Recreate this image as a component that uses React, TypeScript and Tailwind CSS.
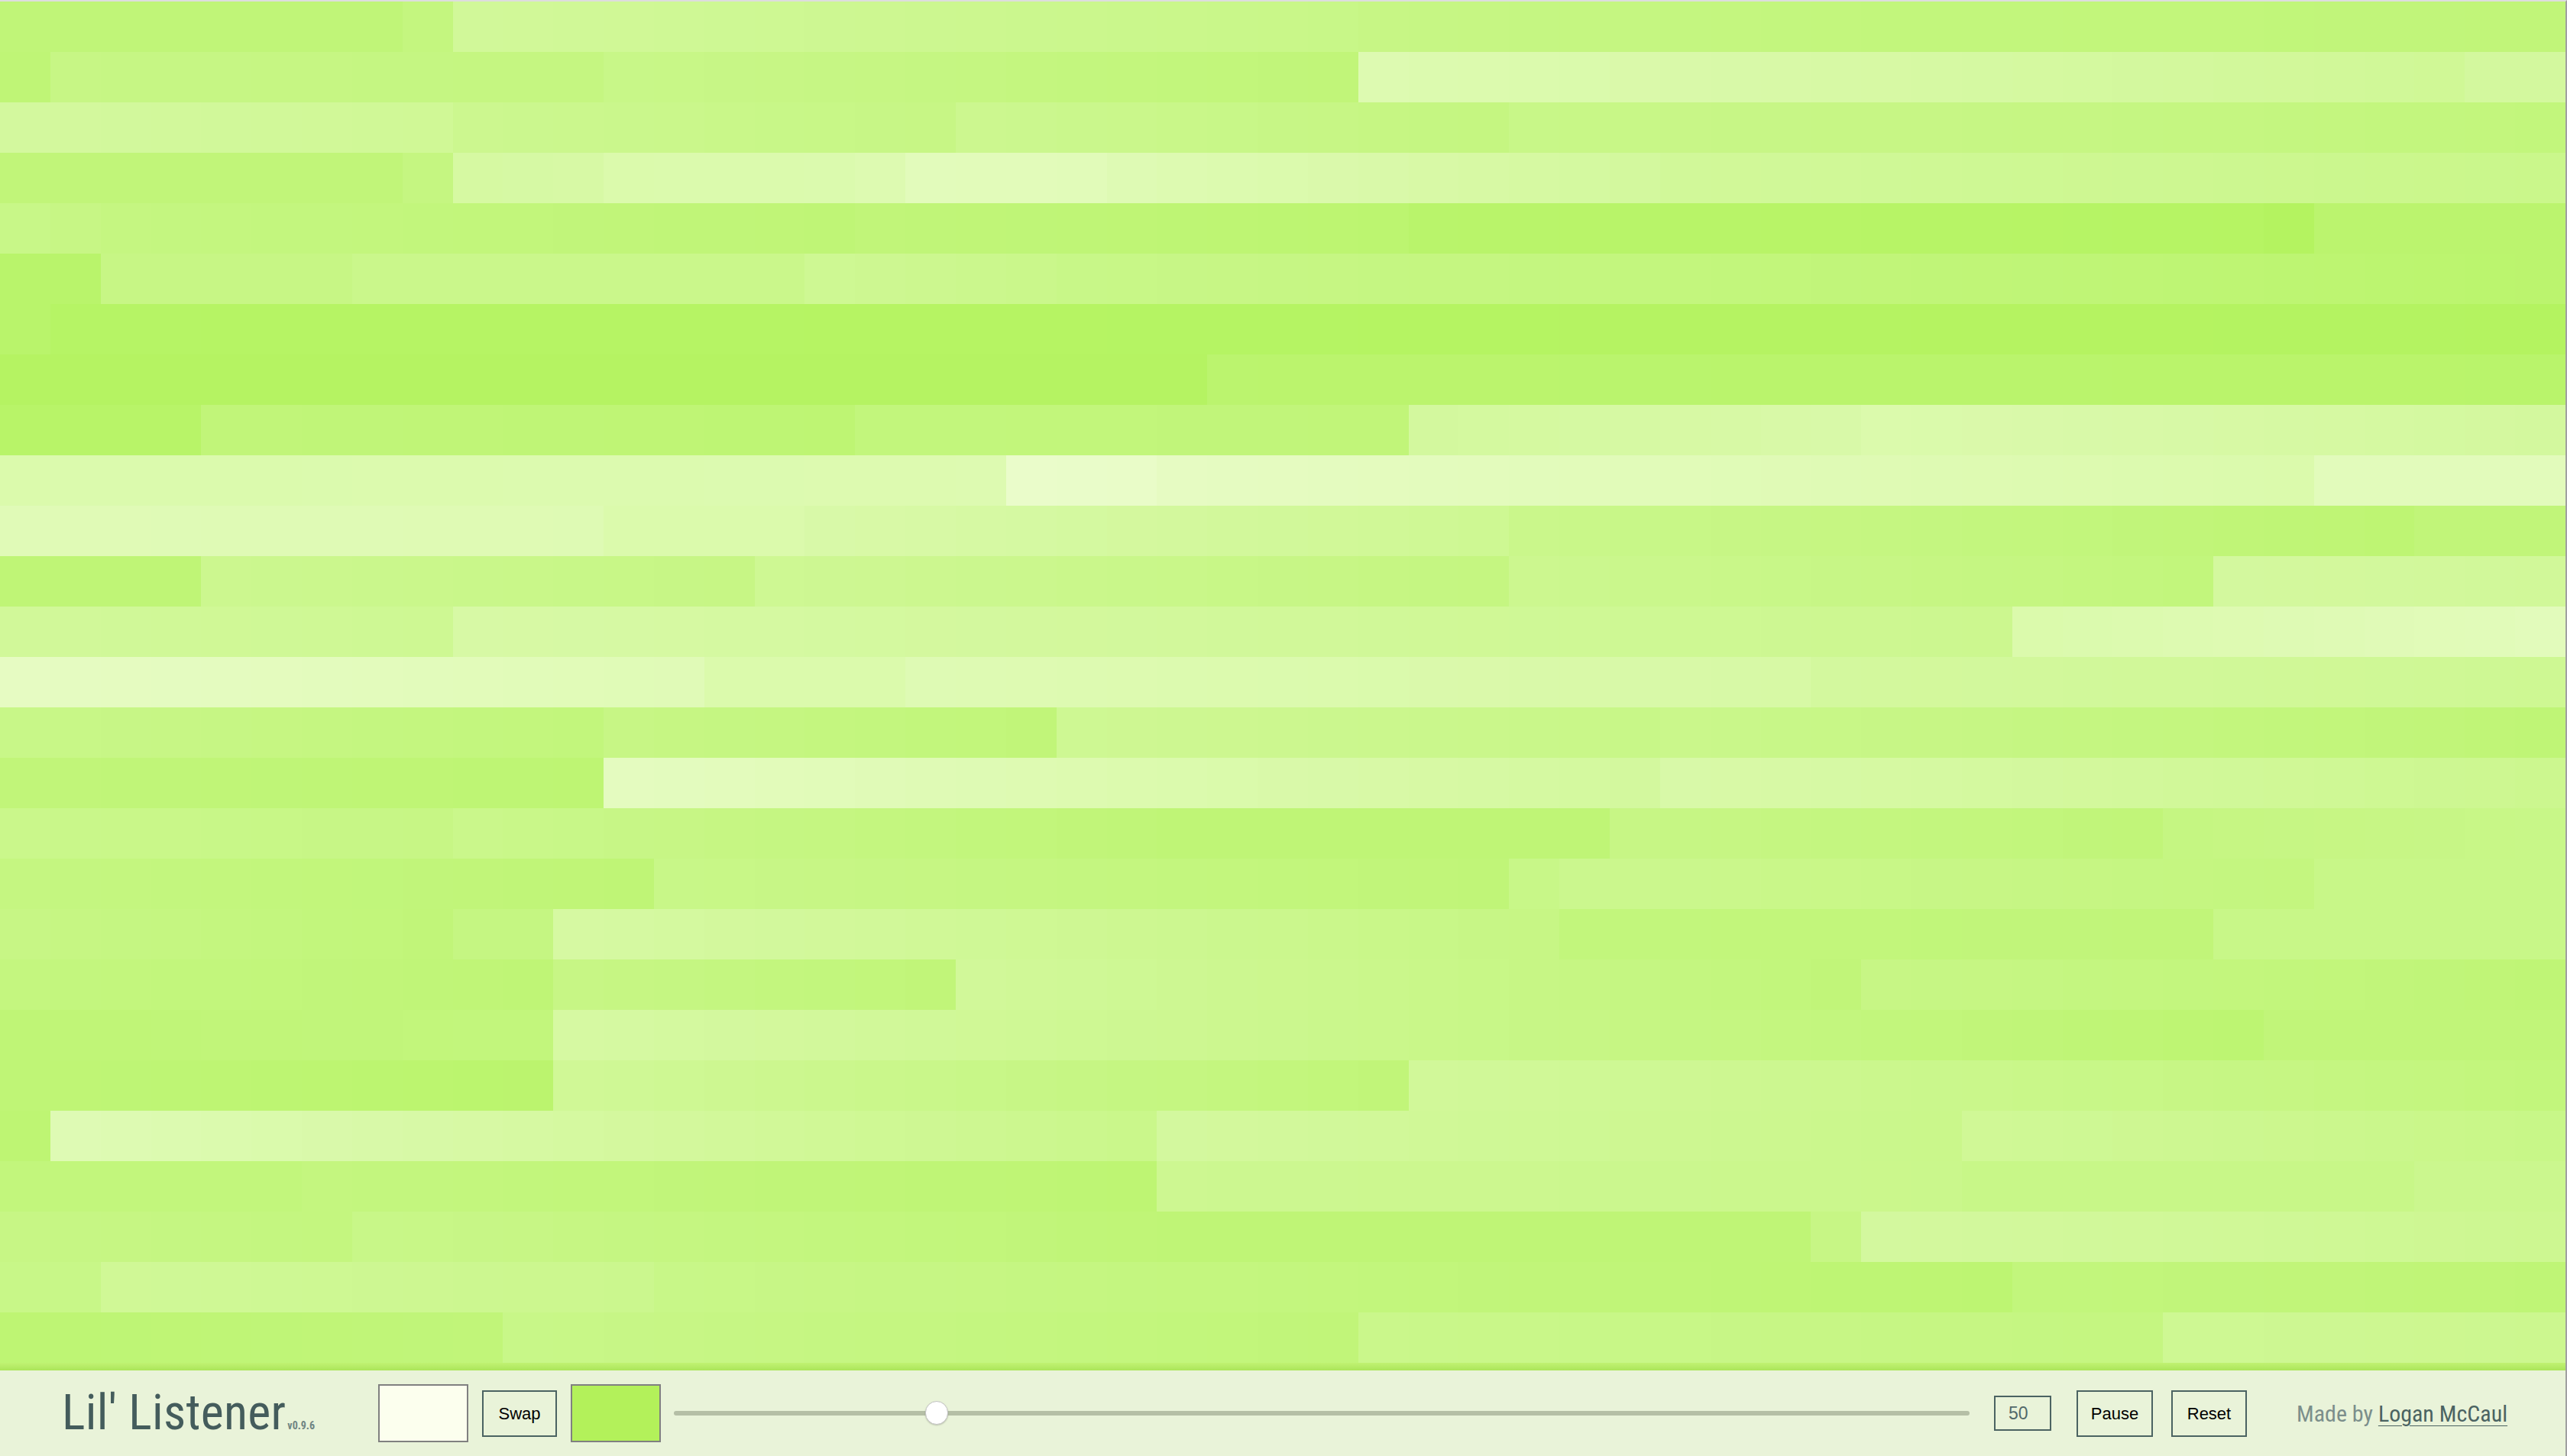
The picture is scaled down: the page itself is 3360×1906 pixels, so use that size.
import React from 'react';

// segments per row: [endCol, tStart, tEnd], t = % toward cream
const ROWS: number[][][] = [
  [[8, 19, 19], [9, 24, 24], [27, 42, 30], [38, 28, 22], [51, 22, 20]],
  [[1, 18, 18], [12, 28, 25], [27, 30, 20], [49, 58, 40], [51, 45, 45]],
  [[9, 45, 40], [19, 35, 28], [30, 35, 25], [38, 30, 28], [51, 28, 22]],
  [[8, 20, 20], [9, 25, 25], [12, 48, 50], [17, 55, 56], [18, 58, 58], [22, 65, 64], [33, 60, 45], [51, 42, 32]],
  [[2, 30, 28], [17, 25, 18], [28, 20, 14], [45, 10, 5], [46, 3, 3], [51, 12, 12]],
  [[2, 10, 10], [7, 28, 28], [16, 32, 32], [21, 38, 32], [51, 30, 12]],
  [[1, 10, 10], [51, 6, 3]],
  [[24, 4, 4], [51, 12, 10]],
  [[4, 8, 8], [17, 20, 16], [28, 22, 20], [37, 45, 52], [51, 55, 45]],
  [[20, 55, 58], [23, 75, 74], [46, 70, 55], [51, 65, 65]],
  [[12, 62, 60], [16, 55, 55], [30, 52, 38], [48, 32, 16], [51, 20, 20]],
  [[4, 18, 18], [15, 35, 28], [30, 38, 25], [44, 35, 22], [51, 45, 42]],
  [[9, 42, 38], [40, 50, 35], [51, 55, 65]],
  [[14, 70, 62], [18, 55, 55], [36, 60, 50], [51, 45, 38]],
  [[12, 30, 22], [21, 28, 20], [33, 38, 30], [51, 32, 18]],
  [[12, 20, 16], [33, 68, 45], [51, 52, 35]],
  [[9, 32, 28], [24, 32, 18], [32, 18, 18], [43, 28, 20], [51, 26, 30]],
  [[13, 25, 18], [30, 30, 19], [31, 30, 30], [46, 34, 24], [51, 30, 30]],
  [[9, 28, 20], [11, 26, 26], [31, 48, 28], [44, 22, 20], [51, 30, 30]],
  [[11, 24, 18], [19, 28, 20], [36, 42, 22], [37, 20, 20], [51, 28, 18]],
  [[11, 18, 22], [45, 48, 15], [51, 20, 20]],
  [[11, 18, 12], [28, 40, 20], [51, 42, 22]],
  [[1, 16, 16], [23, 60, 32], [39, 45, 32], [51, 40, 30]],
  [[6, 22, 22], [23, 24, 16], [39, 36, 33], [48, 30, 30], [51, 34, 34]],
  [[7, 28, 24], [24, 30, 18], [36, 18, 18], [37, 28, 28], [51, 45, 36]],
  [[2, 30, 30], [13, 40, 34], [40, 30, 15], [51, 22, 18]],
  [[10, 16, 20], [27, 30, 20], [43, 32, 25], [51, 38, 35]],
];

const GREEN = [178, 243, 92];
const CREAM = [252, 255, 238];

function mix(t: number) {
  const k = t / 100;
  const c = GREEN.map((g, i) => Math.round(g + (CREAM[i] - g) * k));
  return `rgb(${c[0]},${c[1]},${c[2]})`;
}

function rowColors(segs: number[][]) {
  const out: string[] = [];
  let start = 0;
  for (const [end, a, b] of segs) {
    const n = end - start;
    for (let i = 0; i < n; i++) {
      const t = n > 1 ? a + ((b - a) * i) / (n - 1) : a;
      out.push(mix(t));
    }
    start = end;
  }
  return out;
}

const narrow = "font-['Liberation_Sans_Narrow','Roboto_Condensed','Liberation_Sans',sans-serif]";
const sans = "font-['Liberation_Sans',Arial,sans-serif]";

export default function App() {
  return (
    <div className="h-[1906px] w-full flex flex-col border-t-2 border-r-2 border-t-[#dddddd] border-r-[#a0a0a0] overflow-hidden">
      <div className="flex flex-col">
        {ROWS.map((segs, r) => (
          <div key={r} className="grid grid-cols-[repeat(51,minmax(0,1fr))] h-[66px]">
            {rowColors(segs).map((c, i) => (
              <div key={i} style={{ backgroundColor: c }} />
            ))}
          </div>
        ))}
      </div>
      <div className="h-[10px] bg-gradient-to-b from-[#c0f272] to-[#abe55a]" />
      <div className={`h-[112px] flex items-center pl-[81px] bg-[#e9f3d9] ${narrow}`}>
        <div className="w-[414px] flex-none flex items-baseline">
          <span className="text-[64px] leading-none tracking-[0.3px] text-[#445c5c]">Lil' Listener</span>
          <span className="ml-[2px] text-[14px] font-bold text-[#6f8483]">v0.9.6</span>
        </div>
        <div className="w-[118px] h-[76px] flex-none border-2 border-[#808080] bg-[#fcffee]" />
        <button className={`ml-[18px] w-[98px] h-[61px] flex-none border-2 border-[#4b6362] ${sans} text-[22px] text-black`}>
          Swap
        </button>
        <div className="ml-[18px] w-[118px] h-[76px] flex-none border-2 border-[#808080] bg-[#b3f15a]" />
        <div className="ml-[17px] flex-1 relative h-[32px] flex items-center">
          <div className="w-full h-[6px] rounded-full bg-[#b5bfa6]" />
          <div className="absolute left-[329px] top-0 w-[30px] h-[31px] rounded-full bg-white border border-[#c4c4c4] shadow-[0_1px_2px_rgba(0,0,0,0.2)]" />
        </div>
        <div className={`ml-[32px] w-[75px] h-[46px] flex-none border-2 border-[#4b6362] pl-[17px] flex items-center ${sans} text-[23px] text-[#52696a]`}>
          50
        </div>
        <button className={`ml-[33px] w-[100px] h-[61px] flex-none border-2 border-[#4b6362] ${sans} text-[22px] text-black`}>
          Pause
        </button>
        <button className={`ml-[24px] w-[99px] h-[61px] flex-none border-2 border-[#4b6362] ${sans} text-[22px] text-black`}>
          Reset
        </button>
        <div className="ml-[65px] w-[352px] flex-none text-[30px] whitespace-nowrap">
          <span className="text-[#7b8e8b]">Made by </span>
          <a className="text-[#4b6362] underline decoration-[1px] underline-offset-[5px]">Logan McCaul</a>
        </div>
      </div>
    </div>
  );
}
